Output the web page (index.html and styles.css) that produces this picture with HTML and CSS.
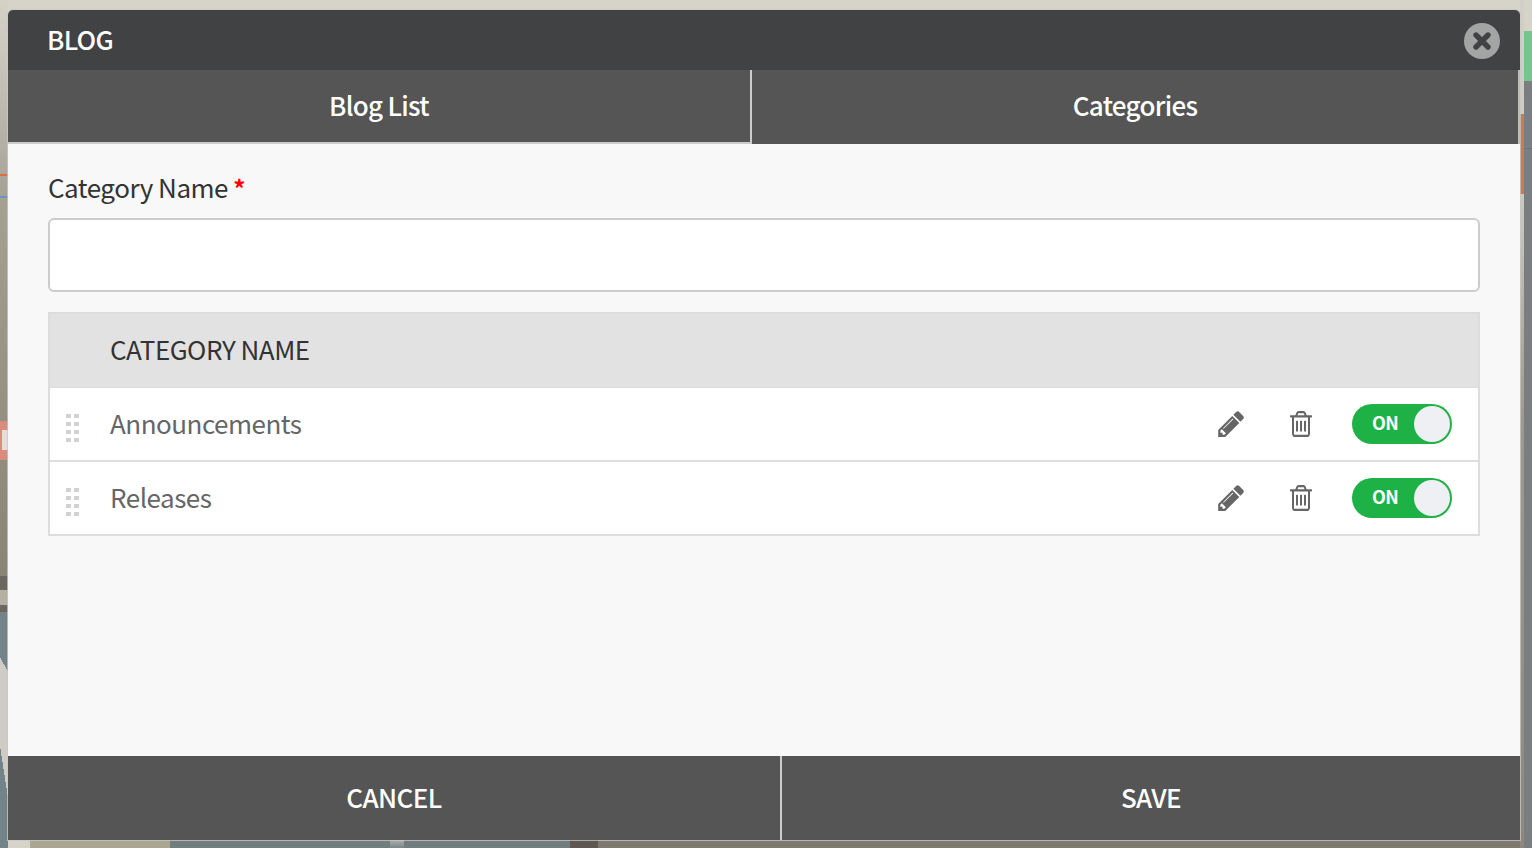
FILE: index.html
```html
<!DOCTYPE html>
<html lang="en">
<head>
<meta charset="utf-8">
<title>Blog</title>
<link rel="stylesheet" href="styles.css">
</head>
<body>
<main class="modal">
  <header class="modal-head">
    <h1 class="modal-title">BLOG</h1>
    <button class="close" aria-label="Close">
      <svg viewBox="0 0 36 36" width="36" height="36"><circle cx="18" cy="18" r="18" fill="#a3a5a4"/><path d="M12 12l12 12M24 12L12 24" stroke="#414244" stroke-width="5.4" stroke-linecap="round"/></svg>
    </button>
  </header>
  <nav class="tabs">
    <div class="tab tab-active">Blog List</div>
    <div class="tab tab-second">Categories</div>
  </nav>
  <section class="body">
    <label class="field-label">Category Name <span class="req">*</span></label>
    <input class="field-input" type="text">
    <div class="table">
      <div class="table-head">CATEGORY NAME</div>
      <div class="row">
        <span class="grip"><i></i><i></i><i></i><i></i><i></i><i></i><i></i><i></i></span>
        <span class="name">Announcements</span>
        <span class="icon-edit"><svg viewBox="128 128 1515 1536" width="26" height="26"><path d="M491 1536l91-91-235-235-91 91v107h128v128h107zm523-928q0-22-22-22-10 0-17 7l-542 542q-7 7-7 17 0 22 22 22 10 0 17-7l542-542q7-7 7-17zm-54-192l416 416-832 832h-416v-416zm683 96q0 53-37 90l-166 166-416-416 166-165q36-38 90-38 53 0 91 38l235 234q37 39 37 91z" fill="#666"/></svg></span>
        <span class="icon-trash"><svg viewBox="192 128 1408 1536" width="22" height="26" preserveAspectRatio="none"><path d="M704 736v576q0 14-9 23t-23 9h-64q-14 0-23-9t-9-23v-576q0-14 9-23t23-9h64q14 0 23 9t9 23zm256 0v576q0 14-9 23t-23 9h-64q-14 0-23-9t-9-23v-576q0-14 9-23t23-9h64q14 0 23 9t9 23zm256 0v576q0 14-9 23t-23 9h-64q-14 0-23-9t-9-23v-576q0-14 9-23t23-9h64q14 0 23 9t9 23zm128 724v-948h-896v948q0 22 7 40.5t14.5 27 10.5 8.5h832q3 0 10.5-8.5t14.5-27 7-40.5zm-672-1076h448l-48-117q-7-9-17-11h-317q-10 2-17 11zm928 32v64q0 14-9 23t-23 9h-96v948q0 83-47 143.5t-113 60.5h-832q-66 0-113-58.5t-47-141.5v-952h-96q-14 0-23-9t-9-23v-64q0-14 9-23t23-9h309l70-167q15-37 54-63t79-26h320q40 0 79 26t54 63l70 167h309q14 0 23 9t9 23z" fill="#666"/></svg></span>
        <span class="toggle"><span class="toggle-text">ON</span><span class="knob"></span></span>
      </div>
      <div class="row">
        <span class="grip"><i></i><i></i><i></i><i></i><i></i><i></i><i></i><i></i></span>
        <span class="name">Releases</span>
        <span class="icon-edit"><svg viewBox="128 128 1515 1536" width="26" height="26"><path d="M491 1536l91-91-235-235-91 91v107h128v128h107zm523-928q0-22-22-22-10 0-17 7l-542 542q-7 7-7 17 0 22 22 22 10 0 17-7l542-542q7-7 7-17zm-54-192l416 416-832 832h-416v-416zm683 96q0 53-37 90l-166 166-416-416 166-165q36-38 90-38 53 0 91 38l235 234q37 39 37 91z" fill="#666"/></svg></span>
        <span class="icon-trash"><svg viewBox="192 128 1408 1536" width="22" height="26" preserveAspectRatio="none"><path d="M704 736v576q0 14-9 23t-23 9h-64q-14 0-23-9t-9-23v-576q0-14 9-23t23-9h64q14 0 23 9t9 23zm256 0v576q0 14-9 23t-23 9h-64q-14 0-23-9t-9-23v-576q0-14 9-23t23-9h64q14 0 23 9t9 23zm256 0v576q0 14-9 23t-23 9h-64q-14 0-23-9t-9-23v-576q0-14 9-23t23-9h64q14 0 23 9t9 23zm128 724v-948h-896v948q0 22 7 40.5t14.5 27 10.5 8.5h832q3 0 10.5-8.5t14.5-27 7-40.5zm-672-1076h448l-48-117q-7-9-17-11h-317q-10 2-17 11zm928 32v64q0 14-9 23t-23 9h-96v948q0 83-47 143.5t-113 60.5h-832q-66 0-113-58.5t-47-141.5v-952h-96q-14 0-23-9t-9-23v-64q0-14 9-23t23-9h309l70-167q15-37 54-63t79-26h320q40 0 79 26t54 63l70 167h309q14 0 23 9t9 23z" fill="#666"/></svg></span>
        <span class="toggle"><span class="toggle-text">ON</span><span class="knob"></span></span>
      </div>
    </div>
  </section>
  <footer class="foot">
    <button class="foot-btn foot-cancel">CANCEL</button>
    <button class="foot-btn foot-save">SAVE</button>
  </footer>
</main>
</body>
</html>
```

FILE: styles.css
```css
* { box-sizing: border-box; }
html, body { margin: 0; height: 100%; overflow: hidden; }
body {
  font-family: "Noto Sans CJK SC", "Noto Sans", sans-serif;
  letter-spacing: -0.5px;
  padding: 10px 12px 8px 8px;
  background:
    /* right column pieces */
    linear-gradient(#c47e52, #c47e52) 1520px 114px / 4px 80px no-repeat,
    linear-gradient(#78c48e, #78c48e) 1524px 31px / 8px 50px no-repeat,
    linear-gradient(#6f7173, #6f7173) 1524px 148px / 8px 1px no-repeat,
    linear-gradient(#7b7e80, #7b7e80) 1524px 81px / 8px 767px no-repeat,
    linear-gradient(#d2cfc6 0, #c9c9c4 200px, #a09a8e 420px, #8f897d 848px) 1520px 0 / 4px 848px no-repeat,
    /* bottom strip */
    linear-gradient(#7f7a70, #7f7a70) 598px 840px / 934px 8px no-repeat,
    linear-gradient(#5f5850, #5f5850) 570px 840px / 28px 8px no-repeat,
    linear-gradient(#aeb0ae, #7a8688) 390px 840px / 14px 8px no-repeat,
    linear-gradient(#727d7f, #727d7f) 170px 840px / 400px 8px no-repeat,
    linear-gradient(#aaa692, #aaa692) 30px 840px / 140px 8px no-repeat,
    /* left column pieces */
    linear-gradient(#e2dfdc, #e2dfdc) 2px 430px / 6px 20px no-repeat,
    linear-gradient(#d98c7c, #d98c7c) 0 421px / 8px 39px no-repeat,
    linear-gradient(#d86f3f, #d86f3f) 0 174px / 8px 2px no-repeat,
    linear-gradient(#6f92c4, #6f92c4) 0 196px / 8px 2px no-repeat,
    linear-gradient(to top right, transparent 50%, #73838a 50%) 0 657px / 8px 15px no-repeat,
    linear-gradient(to top right, #73838a 50%, transparent 50%) 0 746px / 8px 52px no-repeat,
    linear-gradient(#cfccc5, #cfccc5) 0 657px / 8px 141px no-repeat,
    linear-gradient(#6b665e 0 14px, #b5afa4 14px 29px, #6b665e 29px 36px, #73838a 36px) 0 576px / 8px 272px no-repeat,
    linear-gradient(#d4d1c7 0, #cac6bc 60px, #a5a094 200px, #8a8377 576px) 0 0 / 8px 576px no-repeat,
    /* top strip */
    #d6d3c9;
}
.modal {
  display: flex;
  flex-direction: column;
  height: 830px;
  background: #f8f8f8;
  border-radius: 5px 5px 0 0;
  box-shadow: 0 0 0 1px rgba(200,200,195,.75);
}
.modal-head {
  height: 60px;
  flex: none;
  display: flex;
  align-items: center;
  justify-content: space-between;
  padding: 2px 20px 0 40px;
  background: #414244;
  border-radius: 5px 5px 0 0;
}
.modal-title { margin: -4px 0 0 -1px; font-size: 26px; font-weight: 500; line-height: 60px; letter-spacing: -0.7px; color: #fff; }
.close { width: 36px; height: 36px; padding: 0; border: 0; background: none; display: block; }
.close svg { display: block; }
.tabs { display: flex; flex: none; height: 74px; background: #bdbdb9; }
.tab {
  color: #fff;
  font-size: 26px;
  font-weight: 500;
  line-height: 70px;
  letter-spacing: -0.7px;
  text-align: center;
  background: #555;
}
.tab-active { width: 744px; border-right: 2px solid #ccc; border-bottom: 2px solid #ccc; }
.tab-second { flex: 1; margin-right: 2px; }
.body { flex: 1; padding: 28px 40px 0; }
.field-label { display: block; height: 32px; font-size: 26px; line-height: 30px; color: #333; }
.req { color: #f00; font-size: 24px; font-weight: 700; }
.field-input {
  display: block;
  width: 100%;
  height: 74px;
  margin-top: 14px;
  background: #fff;
  border: 2px solid #ccc;
  border-radius: 6px;
}
.table { margin-top: 20px; border: 2px solid #ddd; border-top: 0; background: #fff; }
.table-head {
  height: 76px;
  padding-left: 60px;
  background: #e2e2e2;
  border-top: 2px solid #ddd;
  border-bottom: 1px solid #ddd;
  font-size: 26px;
  line-height: 69px;
  color: #333;
}
.row {
  display: flex;
  align-items: center;
  height: 74px;
  border-bottom: 2px solid #ddd;
  padding-right: 26px;
}
.row:last-child { border-bottom: 0; height: 72px; }
.grip { display: grid; grid-template-columns: 5px 5px; gap: 4px 3px; width: 13px; margin: 8px 0 0 16px; }
.grip i { display: block; width: 5px; height: 4px; background: #d2d2d2; }
.name { flex: 1; margin: 0 0 2px 31px; font-size: 26px; line-height: 36px; color: #666; }
.icon-edit { display: block; width: 26px; height: 26px; margin-right: 46px; }
.icon-trash { display: block; width: 22px; height: 26px; margin-right: 40px; }
.icon-edit svg, .icon-trash svg { display: block; }
.toggle {
  position: relative;
  display: block;
  width: 100px;
  height: 40px;
  border-radius: 20px;
  background: #1db146;
}
.toggle-text { position: absolute; left: 20px; top: 0; font-size: 18px; font-weight: 700; line-height: 37px; color: #fff; }
.knob { position: absolute; right: 2px; top: 2px; width: 36px; height: 36px; border-radius: 50%; background: #eef0f3; }
.foot { display: flex; flex: none; height: 84px; background: #555; }
.foot-btn {
  height: 84px;
  padding: 0 0 3px;
  border: 0;
  background: #555;
  color: #fff;
  font-family: inherit;
  letter-spacing: -0.6px;
  font-size: 26px;
  font-weight: 500;
  text-align: center;
}
.foot-cancel { width: 774px; border-right: 2px solid #ccc; }
.foot-save { flex: 1; }
```
